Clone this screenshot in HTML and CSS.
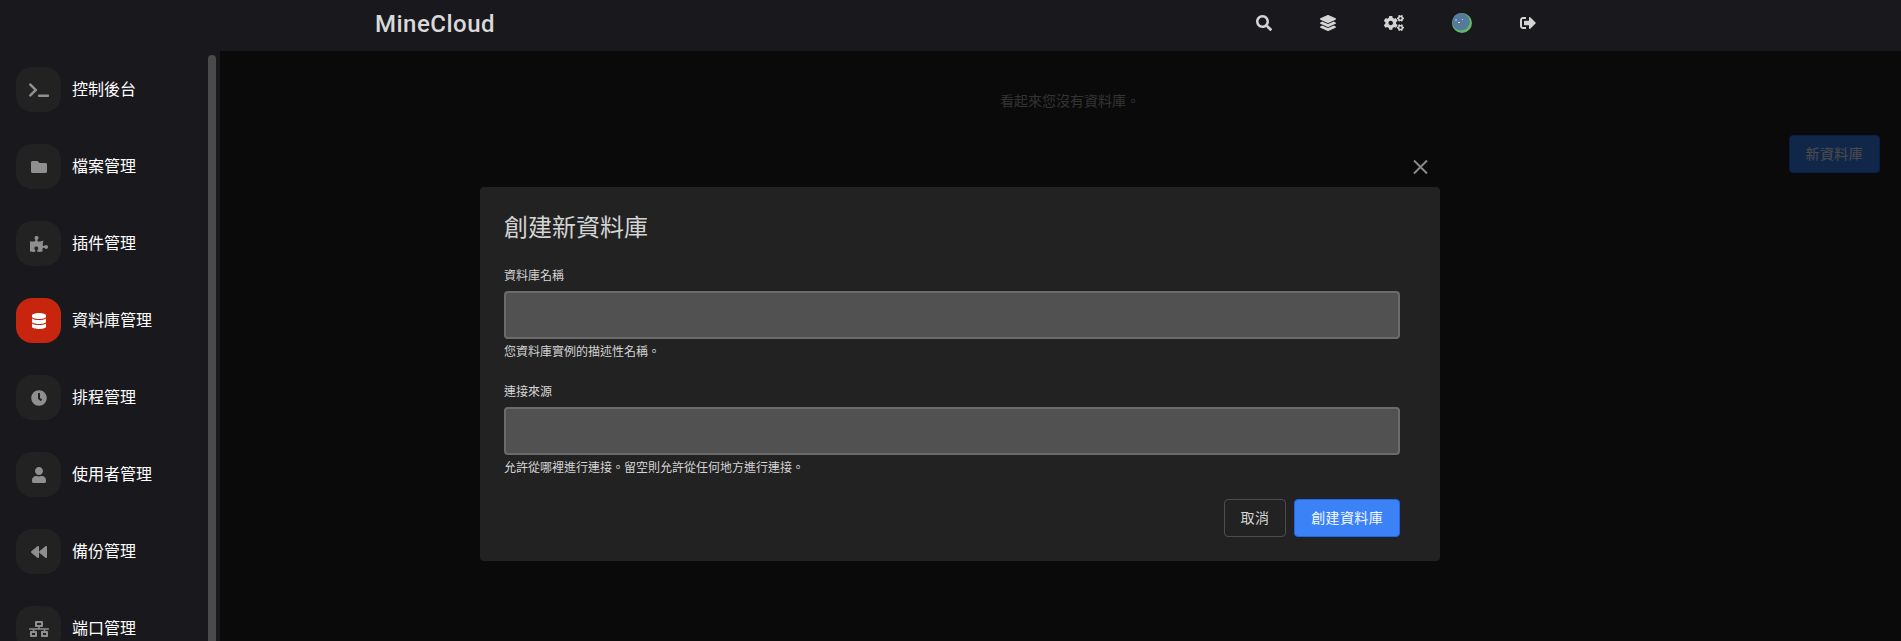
FILE: index.html
```html
<!DOCTYPE html>
<html lang="zh-TW">

<head>
    <meta charset="UTF-8">
    <meta name="viewport" content="width=device-width, initial-scale=1.0">
    <title>MineCloud</title>
    <link rel="stylesheet" href="styles.css">
</head>

<body>
    <div class="app">
        <header class="top_bar">
            <div class="top_inner">
                <a class="logo" href="#">MineCloud</a>
                <nav class="top_icons">
                    <a href="#"><svg class="icon" viewBox="0 0 512 512"><path d="M505 442.7L405.3 343c-4.5-4.5-10.6-7-17-7H372c27.6-35.3 44-79.7 44-128C416 93.1 322.9 0 208 0S0 93.1 0 208s93.1 208 208 208c48.3 0 92.7-16.4 128-44v16.3c0 6.4 2.5 12.5 7 17l99.7 99.7c9.4 9.4 24.6 9.4 33.9 0l28.3-28.3c9.4-9.4 9.4-24.6.1-34zM208 336c-70.7 0-128-57.2-128-128 0-70.7 57.2-128 128-128 70.7 0 128 57.2 128 128 0 70.7-57.2 128-128 128z"/></svg></a>
                    <a href="#"><svg class="icon" viewBox="0 0 512 512"><path d="M12.41 148.02l232.94 105.67c6.8 3.09 14.49 3.09 21.29 0l232.94-105.67c16.55-7.51 16.55-32.52 0-40.03L266.65 2.31a25.607 25.607 0 0 0-21.29 0L12.41 107.98c-16.55 7.51-16.55 32.53 0 40.04zm487.18 88.28l-58.09-26.33-161.64 73.27c-7.56 3.43-15.59 5.17-23.86 5.17s-16.29-1.74-23.86-5.17L70.51 209.97l-58.1 26.33c-16.55 7.5-16.55 32.5 0 40l232.94 105.59c6.8 3.08 14.49 3.08 21.29 0L499.59 276.3c16.55-7.5 16.55-32.5 0-40zm0 127.8l-57.87-26.23-161.86 73.37c-7.56 3.43-15.59 5.17-23.86 5.17s-16.29-1.74-23.86-5.17L70.29 337.87 12.41 364.1c-16.55 7.5-16.55 32.5 0 40l232.94 105.59c6.8 3.08 14.49 3.08 21.29 0L499.59 404.1c16.55-7.5 16.55-32.5 0-40z"/></svg></a>
                    <a href="#"><svg class="icon wide" viewBox="0 0 640 512"><path d="M512.1 191l-8.2 14.3c-3 5.3-9.4 7.5-15.1 5.4-11.8-4.4-22.6-10.7-32.1-18.6-4.6-3.8-5.8-10.5-2.8-15.7l8.2-14.3c-6.9-8-12.3-17.3-15.9-27.4h-16.5c-6 0-11.2-4.3-12.2-10.3-2-12-2.1-24.6 0-37.1 1-6 6.2-10.4 12.2-10.4h16.5c3.6-10.1 9-19.4 15.9-27.4l-8.2-14.3c-3-5.2-1.9-11.9 2.8-15.7 9.5-7.9 20.4-14.2 32.1-18.6 5.7-2.1 12.1.1 15.1 5.4l8.2 14.3c10.5-1.9 21.2-1.9 31.7 0L552 6.3c3-5.3 9.4-7.5 15.1-5.4 11.8 4.4 22.6 10.7 32.1 18.6 4.6 3.8 5.8 10.5 2.8 15.7l-8.2 14.3c6.9 8 12.3 17.3 15.9 27.4h16.5c6 0 11.2 4.3 12.2 10.3 2 12 2.1 24.6 0 37.1-1 6-6.2 10.4-12.2 10.4h-16.5c-3.6 10.1-9 19.4-15.9 27.4l8.2 14.3c3 5.2 1.9 11.9-2.8 15.7-9.5 7.9-20.4 14.2-32.1 18.6-5.7 2.1-12.1-.1-15.1-5.4l-8.2-14.3c-10.4 1.9-21.2 1.9-31.7 0zm-10.5-58.8c38.5 29.6 82.4-14.3 52.8-52.8-38.5-29.7-82.4 14.3-52.8 52.8zM386.3 286.1l33.7 16.8c10.1 5.8 14.5 18.1 10.5 29.1-8.9 24.2-26.4 46.4-42.6 65.8-7.4 8.9-20.2 11.1-30.3 5.3l-29.1-16.8c-16 13.7-34.6 24.6-54.9 31.7v33.6c0 11.6-8.3 21.6-19.7 23.6-24.6 4.2-50.4 4.4-75.9 0-11.5-2-20-11.9-20-23.6V418c-20.3-7.2-38.9-18-54.9-31.7L74 403c-10 5.8-22.9 3.6-30.3-5.3-16.2-19.4-33.3-41.6-42.2-65.7-4-10.9.4-23.2 10.5-29.1l33.3-16.8c-3.9-20.9-3.9-42.4 0-63.4L12 205.8c-10.1-5.8-14.6-18.1-10.5-29 8.9-24.2 26-46.4 42.2-65.8 7.4-8.9 20.2-11.1 30.3-5.3l29.1 16.8c16-13.7 34.6-24.6 54.9-31.7V57.1c0-11.5 8.2-21.5 19.6-23.5 24.6-4.2 50.5-4.4 76-.1 11.5 2 20 11.9 20 23.6v33.6c20.3 7.2 38.9 18 54.9 31.7l29.1-16.8c10-5.8 22.9-3.6 30.3 5.3 16.2 19.4 33.2 41.6 42.1 65.8 4 10.9.1 23.2-10 29.1l-33.7 16.8c3.9 21 3.9 42.5 0 63.5zm-117.6 21.1c59.2-77-28.7-164.9-105.7-105.7-59.2 77 28.7 164.9 105.7 105.7zm243.4 182.7l-8.2 14.3c-3 5.3-9.4 7.5-15.1 5.4-11.8-4.4-22.6-10.7-32.1-18.6-4.6-3.8-5.8-10.5-2.8-15.7l8.2-14.3c-6.9-8-12.3-17.3-15.9-27.4h-16.5c-6 0-11.2-4.3-12.2-10.3-2-12-2.1-24.6 0-37.1 1-6 6.2-10.4 12.2-10.4h16.5c3.6-10.1 9-19.4 15.9-27.4l-8.2-14.3c-3-5.2-1.9-11.9 2.8-15.7 9.5-7.9 20.4-14.2 32.1-18.6 5.7-2.1 12.1.1 15.1 5.4l8.2 14.3c10.5-1.9 21.2-1.9 31.7 0l8.2-14.3c3-5.3 9.4-7.5 15.1-5.4 11.8 4.4 22.6 10.7 32.1 18.6 4.6 3.8 5.8 10.5 2.8 15.7l-8.2 14.3c6.9 8 12.3 17.3 15.9 27.4h16.5c6 0 11.2 4.3 12.2 10.3 2 12 2.1 24.6 0 37.1-1 6-6.2 10.4-12.2 10.4h-16.5c-3.6 10.1-9 19.4-15.9 27.4l8.2 14.3c3 5.2 1.9 11.9-2.8 15.7-9.5 7.9-20.4 14.2-32.1 18.6-5.7 2.1-12.1-.1-15.1-5.4l-8.2-14.3c-10.4 1.9-21.2 1.9-31.7 0zM501.6 431c38.5 29.6 82.4-14.3 52.8-52.8-38.5-29.6-82.4 14.3-52.8 52.8z"/></svg></a>
                    <a href="#"><svg class="avatar" viewBox="0 0 20 20"><circle cx="10" cy="10" r="10" fill="#66b866"/><circle cx="9" cy="8.8" r="8.8" fill="#557a9b"/><rect x="3" y="6.5" width="2" height="1" fill="#c4d2de"/><rect x="10" y="6" width="1" height="1" fill="#c4d2de"/><rect x="6" y="9" width="2" height="1" fill="#c4d2de"/></svg></a>
                    <a href="#"><svg class="icon" viewBox="0 0 512 512"><path d="M497 273L329 441c-15 15-41 4.5-41-17v-96H152c-13.3 0-24-10.7-24-24v-96c0-13.3 10.7-24 24-24h136V88c0-21.4 25.9-32 41-17l168 168c9.3 9.4 9.3 24.6 0 34zM192 436v-40c0-6.6-5.4-12-12-12H96c-17.7 0-32-14.3-32-32V160c0-17.7 14.3-32 32-32h84c6.6 0 12-5.4 12-12V76c0-6.6-5.4-12-12-12H96c-53 0-96 43-96 96v192c0 53 43 96 96 96h84c6.6 0 12-5.4 12-12z"/></svg></a>
                </nav>
            </div>
        </header>

        <div class="body_row">
            <aside class="side_bar">
                <span class="thumb"></span>
                <ul>
                    <li><a href="#"><span class="box"><svg class="icon wide" viewBox="0 0 640 512"><path d="M257.981 272.971L63.638 467.314c-9.373 9.373-24.569 9.373-33.941 0L7.029 444.647c-9.357-9.357-9.375-24.522-.04-33.901L161.011 256 6.99 101.255c-9.335-9.379-9.317-24.544.04-33.901l22.667-22.667c9.373-9.373 24.569-9.373 33.941 0L257.981 239.03c9.373 9.372 9.373 24.568 0 33.941zM640 456v-32c0-13.255-10.745-24-24-24H312c-13.255 0-24 10.745-24 24v32c0 13.255 10.745 24 24 24h304c13.255 0 24-10.745 24-24z"/></svg></span>控制後台</a></li>
                    <li><a href="#"><span class="box"><svg class="icon" viewBox="0 0 512 512"><path d="M464 128H272l-64-64H48C21.49 64 0 85.49 0 112v288c0 26.51 21.49 48 48 48h416c26.51 0 48-21.49 48-48V176c0-26.51-21.49-48-48-48z"/></svg></span>檔案管理</a></li>
                    <li><a href="#"><span class="box"><svg class="icon puzzle" viewBox="0 0 576 512"><path d="M519.442 288.651c-41.519 0-59.5 31.593-82.058 31.593C377.409 320.244 432 144 432 144s-196.288 80-196.288-3.297c0-35.827 36.288-46.25 36.288-85.985C272 19.216 243.885 0 210.539 0c-34.654 0-66.366 18.891-66.366 56.346 0 41.364 31.711 59.277 31.711 81.75C175.885 207.719 0 166.758 0 166.758v333.237s178.635 41.047 178.635-28.662c0-22.473-40-40.107-40-81.471 0-37.456 29.25-56.346 63.577-56.346 33.673 0 61.788 19.216 61.788 54.717 0 39.735-36.288 50.158-36.288 85.985 0 60.803 129.675 25.73 181.23 25.73 0 0-34.725-120.101 25.827-120.101 35.962 0 46.423 36.152 86.308 36.152C556.712 416 576 387.99 576 354.443c0-34.199-18.962-65.792-56.558-65.792z"/></svg></span>插件管理</a></li>
                    <li class="current"><a href="#"><span class="box"><svg class="icon db" viewBox="0 0 448 512"><path d="M448 73.143v45.714C448 159.143 347.667 192 224 192S0 159.143 0 118.857V73.143C0 32.857 100.333 0 224 0s224 32.857 224 73.143zM448 176v102.857C448 319.143 347.667 352 224 352S0 319.143 0 278.857V176c48.125 33.143 136.208 48.572 224 48.572S399.874 209.143 448 176zm0 160v102.857C448 479.143 347.667 512 224 512S0 479.143 0 438.857V336c48.125 33.143 136.208 48.572 224 48.572S399.874 369.143 448 336z"/></svg></span>資料庫管理</a></li>
                    <li><a href="#"><span class="box"><svg class="icon" viewBox="0 0 512 512"><path d="M256,8C119,8,8,119,8,256S119,504,256,504,504,393,504,256,393,8,256,8Zm92.49,313h0l-20,25a16,16,0,0,1-22.49,2.5h0l-67-49.72a40,40,0,0,1-15-31.23V112a16,16,0,0,1,16-16h32a16,16,0,0,1,16,16V256l58,42.5A16,16,0,0,1,348.49,321Z"/></svg></span>排程管理</a></li>
                    <li><a href="#"><span class="box"><svg class="icon db" viewBox="0 0 448 512"><path d="M224 256c70.7 0 128-57.3 128-128S294.7 0 224 0 96 57.3 96 128s57.3 128 128 128zm89.6 32h-16.7c-22.2 10.2-46.9 16-72.9 16s-50.6-5.8-72.9-16h-16.7C60.2 288 0 348.2 0 422.4V464c0 26.5 21.5 48 48 48h352c26.5 0 48-21.5 48-48v-41.6c0-74.2-60.2-134.4-134.4-134.4z"/></svg></span>使用者管理</a></li>
                    <li><a href="#"><span class="box"><svg class="icon" viewBox="0 0 512 512"><path d="M11.5 280.6l192 160c20.6 17.2 52.5 2.8 52.5-24.6V96c0-27.4-31.9-41.8-52.5-24.6l-192 160c-15.3 12.8-15.3 36.4 0 49.2zm256 0l192 160c20.6 17.2 52.5 2.8 52.5-24.6V96c0-27.4-31.9-41.8-52.5-24.6l-192 160c-15.3 12.8-15.3 36.4 0 49.2z"/></svg></span>備份管理</a></li>
                    <li><a href="#"><span class="box"><svg class="icon wide" viewBox="0 0 640 512"><path d="M640 264v-16c0-8.84-7.16-16-16-16H344v-40h72c17.67 0 32-14.33 32-32V32c0-17.67-14.33-32-32-32H224c-17.67 0-32 14.33-32 32v128c0 17.67 14.33 32 32 32h72v40H16c-8.84 0-16 7.16-16 16v16c0 8.84 7.16 16 16 16h104v40H64c-17.67 0-32 14.33-32 32v128c0 17.67 14.33 32 32 32h160c17.67 0 32-14.33 32-32V352c0-17.67-14.33-32-32-32h-56v-40h304v40h-56c-17.67 0-32 14.33-32 32v128c0 17.67 14.33 32 32 32h160c17.67 0 32-14.33 32-32V352c0-17.67-14.33-32-32-32h-56v-40h104c8.84 0 16-7.16 16-16zM256 128V64h128v64H256zm-64 320H96v-64h96v64zm352 0h-96v-64h96v64z"/></svg></span>端口管理</a></li>
                </ul>
            </aside>

            <main class="content">
                <p class="empty">看起來您沒有資料庫。</p>
                <div class="content_btns">
                    <button class="btn primary">新資料庫</button>
                </div>
            </main>
        </div>

        <div class="overlay"></div>
        <div class="modal_wrap">
            <div class="close_row">
                <svg class="close_x" viewBox="0 0 15 14"><path d="M1 .5L14 13.5M14 .5L1 13.5"/></svg>
            </div>
            <form class="modal">
                <h2>創建新資料庫</h2>
                <div class="field">
                    <label>資料庫名稱</label>
                    <input type="text">
                    <p>您資料庫實例的描述性名稱。</p>
                </div>
                <div class="field">
                    <label>連接來源</label>
                    <input type="text">
                    <p>允許從哪裡進行連接。留空則允許從任何地方進行連接。</p>
                </div>
                <div class="modal_btns">
                    <button type="button" class="btn secondary">取消</button>
                    <button type="button" class="btn primary">創建資料庫</button>
                </div>
            </form>
        </div>
    </div>
</body>

</html>
```
FILE: styles.css
```css
* {
    margin: 0;
    padding: 0;
    box-sizing: border-box;
}

html,
body {
    height: 100%;
    overflow: hidden;
    background-color: #222;
}

body {
    font-family: Roboto, "Noto Sans CJK TC", sans-serif;
}

a {
    color: inherit;
    text-decoration: none;
}

ul {
    list-style: none;
}

.app {
    position: relative;
    display: flex;
    flex-direction: column;
    width: 1920px;
    height: 641px;
    overflow: hidden;
}

.icon {
    display: block;
    width: 16px;
    height: 16px;
    fill: currentColor;
}

.icon.wide {
    width: 20px;
}

.icon.puzzle {
    width: 18px;
}

.icon.db {
    width: 14px;
}

/* top */
.top_bar {
    flex: none;
    height: 51px;
    background-color: #18181d;
}

.top_inner {
    display: flex;
    justify-content: space-between;
    align-items: center;
    width: 1200px;
    height: 46px;
    margin: 0 auto;
}

.logo {
    padding: 2px 0 0 15px;
    font-size: 24px;
    font-weight: 500;
    letter-spacing: .5px;
    color: #d9d9d9;
}

.top_icons {
    display: flex;
    align-items: center;
    color: #d4d4d4;
}

.top_icons a {
    padding: 0 24px;
}

.avatar {
    display: block;
    width: 20px;
    height: 20px;
}

/* side */
.body_row {
    flex: 1;
    display: flex;
    min-height: 0;
}

.side_bar {
    position: relative;
    flex: none;
    width: 220px;
    padding-top: 16px;
    overflow: hidden;
    background-color: #18181d;
}

.thumb {
    position: absolute;
    top: 4px;
    bottom: 0;
    left: 208px;
    width: 8px;
    border-radius: 4px 4px 0 0;
    background-color: #4a4a4a;
}

.side_bar li {
    height: 77px;
    padding-left: 16px;
}

.side_bar li a {
    display: flex;
    align-items: flex-start;
    gap: 11px;
    height: 45px;
    font-size: 16px;
    line-height: 45px;
    color: #fff;
}

.box {
    display: flex;
    justify-content: center;
    align-items: center;
    width: 45px;
    height: 45px;
    padding-left: 1px;
    border-radius: 16px;
    background-color: #222;
    color: #8f8f8f;
}

.current .box {
    background-color: #c8250f;
    color: #fff;
}

/* main, dimmed by the overlay */
.content {
    flex: 1;
    padding: 40px;
    background-color: #222;
}

.empty {
    font-size: 14px;
    line-height: 20px;
    text-align: center;
    color: #aaa;
}

.content_btns {
    display: flex;
    justify-content: flex-end;
    margin-top: 24px;
}

.btn {
    height: 38px;
    padding: 0 16px;
    border: 1px solid transparent;
    border-radius: 4px;
    font-family: inherit;
    font-size: 14px;
    line-height: 20px;
    letter-spacing: .025em;
}

.btn.primary {
    background-color: #3b82f6;
    border-color: #2563eb;
    color: #f5f8ff;
}

.btn.secondary {
    background-color: transparent;
    border-color: #4d4d4d;
    color: #d4d4d4;
}

/* modal */
.overlay {
    position: absolute;
    top: 51px;
    left: 220px;
    right: 0;
    bottom: 0;
    background-color: rgba(0, 0, 0, .7);
}

.modal_wrap {
    position: absolute;
    top: 160px;
    left: 480px;
    width: 960px;
}

.close_row {
    display: flex;
    justify-content: flex-end;
    height: 27px;
    padding-right: 12px;
}

.close_x {
    display: block;
    width: 15px;
    height: 14px;
    fill: none;
    stroke: #8a8a8a;
    stroke-width: 2;
}

.modal {
    padding: 24px 40px 24px 24px;
    border-radius: 4px;
    background-color: #222;
}

.modal h2 {
    margin-bottom: 22px;
    font-size: 24px;
    font-weight: 400;
    line-height: 34px;
    color: #d4d4d4;
}

.field {
    margin-bottom: 23px;
}

.field label {
    display: block;
    margin-bottom: 6px;
    font-size: 12px;
    line-height: 18px;
    color: #d4d4d4;
}

.field input {
    display: block;
    width: 100%;
    height: 48px;
    border: 2px solid #6b6b6b;
    border-radius: 4px;
    outline: 0;
    background-color: #515151;
}

.field p {
    margin-top: 5px;
    font-size: 12px;
    line-height: 16px;
    color: #d4d4d4;
}

.modal_btns {
    display: flex;
    justify-content: flex-end;
    gap: 8px;
}
```
